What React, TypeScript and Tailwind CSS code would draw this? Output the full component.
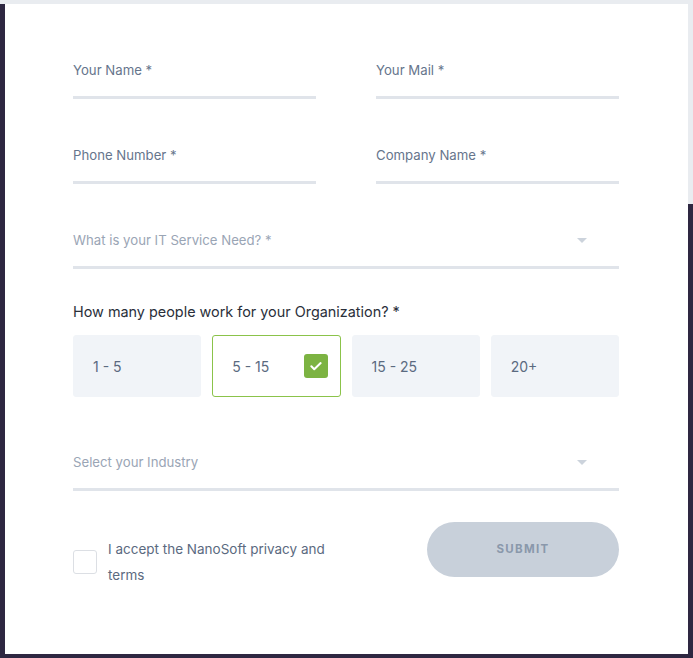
import { useState } from 'react'

const options = ['1 - 5', '5 - 15', '15 - 25', '20+']

function Field({ label }: { label: string }) {
  return (
    <div className="flex flex-col gap-4">
      <span className="text-[13.2px] leading-5 text-[#66758c]">{label}</span>
      <div className="h-[3px] bg-[#e0e4ea]" />
    </div>
  )
}

function SelectField({ placeholder }: { placeholder: string }) {
  return (
    <div className="flex flex-col gap-4">
      <div className="flex items-center justify-between pr-[32px]">
        <span className="text-[13.2px] leading-5 text-[#9aa5b5]">{placeholder}</span>
        <span className="h-0 w-0 border-x-[5px] border-t-[5px] border-x-transparent border-t-[#ccd3dc]" />
      </div>
      <div className="h-[3px] bg-[#e0e4ea]" />
    </div>
  )
}

export default function App() {
  const [selected, setSelected] = useState(1)
  const [accepted, setAccepted] = useState(false)

  return (
    <div
      className="h-[658px] w-[693px] pb-[4px] pl-[5px] pr-[5px] pt-[4px] [background:linear-gradient(#e9ecf0,#e9ecf0)_left_top/100%_4px_no-repeat,linear-gradient(#e9ecf0,#e9ecf0)_right_top/5px_204px_no-repeat,#2e2741]"
      style={{ fontFamily: 'Inter, "Open Sans", sans-serif' }}
    >
      <div className="h-full bg-white pl-[68px] pr-[69px] pt-[56px]">
        <div className="grid grid-cols-2 gap-x-[60px] gap-y-[46px]">
          <Field label="Your Name *" />
          <Field label="Your Mail *" />
          <Field label="Phone Number *" />
          <Field label="Company Name *" />
        </div>

        <div className="mt-[46px]">
          <SelectField placeholder="What is your IT Service Need? *" />
        </div>

        <p className="mt-[33px] text-[14.4px] leading-5 text-[#2a2f3a]">
          How many people work for your Organization? *
        </p>

        <div className="mt-[13px] grid grid-cols-4 gap-[11px]">
          {options.map((opt, i) => (
            <button
              key={opt}
              onClick={() => setSelected(i)}
              className={
                i === selected
                  ? 'flex h-[62px] items-center justify-between rounded-[3px] border border-[#8bc34a] bg-white pl-[19px] pr-[12px] text-left text-[14px] text-[#5b6a80]'
                  : 'flex h-[62px] items-center rounded-[3px] border border-[#f1f4f8] bg-[#f1f4f8] pl-[19px] text-left text-[14px] text-[#5b6a80]'
              }
            >
              <span>{opt}</span>
              {i === selected && (
                <span className="flex h-[24px] w-[24px] items-center justify-center rounded-[3px] bg-[#7cb342]">
                  <svg width="14" height="14" viewBox="0 0 24 24" fill="none" stroke="white" strokeWidth="3.5" strokeLinecap="round" strokeLinejoin="round">
                    <path d="M4 12.5l5 5L20 7" />
                  </svg>
                </span>
              )}
            </button>
          ))}
        </div>

        <div className="mt-[55px]">
          <SelectField placeholder="Select your Industry" />
        </div>

        <div className="mt-[31px] flex items-start justify-between">
          <label className="mt-[14px] flex items-center gap-[11px]">
            <input
              type="checkbox"
              checked={accepted}
              onChange={(e) => setAccepted(e.target.checked)}
              className="h-[24px] w-[24px] shrink-0 appearance-none rounded-[3px] border border-[#dcdfe4] bg-white"
            />
            <span className="w-[236px] text-[13.5px] leading-[26px] text-[#5b6a80]">
              I accept the NanoSoft privacy and terms
            </span>
          </label>
          <button className="h-[55px] w-[192px] rounded-full bg-[#c8d0da] text-[11.5px] font-bold tracking-[1.3px] text-[#8a98ab]">
            SUBMIT
          </button>
        </div>
      </div>
    </div>
  )
}
